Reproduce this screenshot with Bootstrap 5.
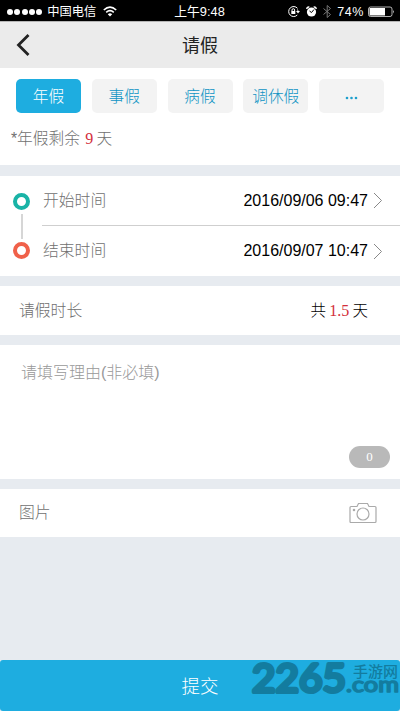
<!DOCTYPE html>
<html lang="zh-CN">
<head>
<meta charset="utf-8">
<meta name="viewport" content="width=device-width, initial-scale=1">
<title>请假</title>
<link href="https://cdn.jsdelivr.net/npm/bootstrap@5.3.0/dist/css/bootstrap.min.css" rel="stylesheet">
<style>
body{font-family:"Liberation Sans","Noto Sans CJK SC",sans-serif;font-size:15.8px;line-height:24px;font-weight:300;color:#707070;background:#e7ebf0;overflow:hidden}
.screen{width:400px;height:711px}
.status{height:21px;background:#000;color:#fff;font-size:12.3px;line-height:20px;font-weight:400;padding:2px 5px 0 7px}
.side{flex:1 1 0}
.dots{gap:1.3px;margin-right:5px}
.dots i{width:6px;height:6px;border-radius:50%;background:#fff}
.clock{font-size:12.8px;margin-right:3px}
.charge{font-size:12.5px;margin-left:6px;margin-right:1px;letter-spacing:.6px}
.topbar{height:47px;background:#ebebeb;border-top:1px solid #b5b5b5;color:#222;padding-left:16px}
.topbar h1{font-size:18px;line-height:24px;font-weight:400;padding-top:1px}
.types{height:97px;padding:11px 16px 0}
.types .btn{--bs-btn-padding-x:0;--bs-btn-padding-y:0;--bs-btn-border-width:0;--bs-btn-border-radius:5px;--bs-btn-font-weight:300;--bs-btn-font-size:15.7px;--bs-btn-line-height:34px;--bs-btn-color:#0f93c4;--bs-btn-bg:#f3f3f3;--bs-btn-active-bg:#1eade0;--bs-btn-active-color:#fff;width:65px;height:34px;padding-top:1px}
.remain{margin:14px 0 0 -5px;font-size:15.7px;line-height:24px}
.num{font-family:"Liberation Serif",serif;color:#d32f3c;font-weight:400;font-size:16px}
.remain .num{margin:0 1px}
.remain .num + span{margin-left:-2px}
.gap-band{margin-top:10px}
.times{height:100px;margin-top:11px}
.rail{width:42px;padding:17px 0 0 13px}
.ring{width:17px;height:17px;border:4px solid #19b3a6;border-radius:50%}
.ring-end{border-color:#f0614a}
.link-line{width:2px;height:25px;background:#d6d6d6;margin:3.5px 0 3.5px 7.5px}
.time-row{height:49px;padding:0 17px 0 1px}
.time-row + .time-row{height:51px;border-top:1px solid #cfcfcf}
.dark{color:#000;font-weight:400;font-size:16px}
.chev{margin-left:5px}
.length-row{height:49px;padding:0 32px 0 19px;margin-top:10px}
.total{color:#000;font-size:15.5px;word-spacing:-1px}
.reason{height:134px;padding:16px 10px 11px 21px;color:#999;font-size:16px}
.counter{width:41px;height:22px;background:#b9b9b9;--bs-badge-font-size:13px;--bs-badge-font-weight:400;--bs-badge-padding-x:0;--bs-badge-padding-y:0;line-height:22px;font-family:"Liberation Serif",serif}
.photo{height:48px;padding:0 23px 0 19px}
.submit{--bs-btn-bg:#1eade0;--bs-btn-color:#fff;--bs-btn-border-width:0;--bs-btn-border-radius:3px;--bs-btn-font-size:18.5px;--bs-btn-font-weight:300;height:51px;padding-top:8px}
.watermark{right:0;bottom:0;pointer-events:none}
</style>
<script src="https://cdn.jsdelivr.net/npm/bootstrap@5.3.0/dist/js/bootstrap.bundle.min.js"></script>
</head>
<body>
<div class="screen d-flex flex-column position-relative">
  <div class="status d-flex align-items-center">
    <div class="side d-flex align-items-center">
      <span class="dots d-flex"><i></i><i></i><i></i><i></i><i></i></span>
      <span>中国电信</span>
      <svg style="margin-left:7px" width="14" height="11" viewBox="0 0 14 11" fill="none" stroke="#fff" stroke-width="1.6"><path d="M.8 4Q7-1.6 13.2 4M3.2 6.3Q7 3 10.8 6.3"/><path d="M4.8 8.2Q7 6.2 9.2 8.2L7 10.5Z" fill="#fff" stroke="none"/></svg>
    </div>
    <span class="clock">上午9:48</span>
    <div class="side d-flex align-items-center justify-content-end">
      <svg width="44" height="15" viewBox="286 3 44 15" fill="none" stroke="#fff"><path d="M296.5 7.3A5 5 0 1 0 296.3 14M296.5 8.5a5 5 0 0 1 .5 2.5"/><path d="M295 10h4l-2 2.5z" fill="#fff" stroke="none"/><path d="M290.3 10h4v3h-4z" fill="#fff" stroke="none"/><path d="M291 10V9a1.3 1.3 0 0 1 2.6 0v1"/><circle cx="310.5" cy="11" r="4.6" fill="#fff" stroke="none"/><path d="M305.8 8a2 2 0 0 1 2.5-2M315.2 8a2 2 0 0 0-2.5-2" stroke-width="1.4"/><path d="M308.5 10l2 1.5 2.5-3" stroke="#000"/><path d="M322.5 7.5l7 6-3.3 3V4.5l3.3 3-7 6" stroke="#777"/></svg>
      <span class="charge">74%</span>
      <svg style="margin-left:3px" width="27" height="12" viewBox="0 0 27 12"><rect x=".5" y="1" width="23.5" height="9.5" rx="2" fill="none" stroke="#ddd" stroke-width=".8"/><path d="M1.5 2h15.5v7.5H1.5z" fill="#fff"/><path d="M25 4v3.5q1.5-1.7 0-3.5" fill="#fff"/></svg>
    </div>
  </div>
  <header class="topbar d-flex align-items-center position-relative">
    <svg width="14" height="22" viewBox="0 0 14 22" fill="none" stroke="#222" stroke-width="2.8"><path d="M12.5 1L2.5 11l10 10"/></svg>
    <h1 class="mb-0 position-absolute start-50 translate-middle-x">请假</h1>
  </header>
  <section class="types bg-white">
    <div class="d-flex justify-content-between">
      <button class="btn active">年假</button><button class="btn">事假</button><button class="btn">病假</button><button class="btn">调休假</button><button class="btn"><svg width="13" height="4" viewBox="0 0 13 4" fill="#1d9fcd"><circle cx="2" cy="2" r="1.3"/><circle cx="6.5" cy="2" r="1.3"/><circle cx="11" cy="2" r="1.3"/></svg></button>
    </div>
    <p class="remain">*年假剩余 <span class="num">9</span> <span>天</span></p>
  </section>
  <section class="times bg-white d-flex">
    <div class="rail"><div class="ring"></div><div class="link-line"></div><div class="ring ring-end"></div></div>
    <div class="flex-grow-1">
      <div class="time-row d-flex align-items-center justify-content-between"><span>开始时间</span><span class="d-flex align-items-center dark">2016/09/06 09:47<svg class="chev" width="10" height="17" viewBox="0 0 10 17" fill="none" stroke="#888"><path d="M1 1l7.5 7.5L1 16"/></svg></span></div>
      <div class="time-row d-flex align-items-center justify-content-between"><span>结束时间</span><span class="d-flex align-items-center dark">2016/09/07 10:47<svg class="chev" width="10" height="17" viewBox="0 0 10 17" fill="none" stroke="#888"><path d="M1 1l7.5 7.5L1 16"/></svg></span></div>
    </div>
  </section>
  <section class="length-row bg-white d-flex align-items-center justify-content-between"><span>请假时长</span><span class="total">共 <span class="num">1.5</span> 天</span></section>
  <section class="reason bg-white gap-band d-flex flex-column justify-content-between"><span>请填写理由(非必填)</span><span class="counter badge rounded-pill align-self-end">0</span></section>
  <section class="photo bg-white gap-band d-flex align-items-center justify-content-between"><span>图片</span>
    <svg width="28" height="22" viewBox="0 0 28 22" fill="none" stroke="#aaa" stroke-width="1.2"><path d="M2 4.5h6l1.5-3h9l1.5 3h6q1 0 1 1v14q0 1-1 1H2q-1 0-1-1v-14q0-1 1-1Z"/><circle cx="14" cy="12" r="6"/><circle cx="5" cy="8" r=".7"/></svg>
  </section>
  <button class="submit btn w-100 mt-auto">提交</button>
  <svg class="watermark position-absolute" width="160" height="71" viewBox="240 640 160 71" fill="#137c9f" stroke="#137c9f" stroke-linejoin="round" stroke-linecap="round">
    <text x="252" y="691.5" font-family="Lato,sans-serif" font-size="39" font-weight="400" stroke-width="4" textLength="94" lengthAdjust="spacingAndGlyphs">2265</text>
    <text x="353" y="676.5" font-family="'Noto Sans CJK SC',sans-serif" font-size="14.5" font-weight="500" stroke="none" textLength="45" lengthAdjust="spacingAndGlyphs">手游网</text>
    <text x="346" y="692" font-family="Lato,sans-serif" font-size="21" font-weight="400" stroke-width="1.6" textLength="53" lengthAdjust="spacingAndGlyphs">.com</text>
  </svg>
</div>
</body>
</html>
